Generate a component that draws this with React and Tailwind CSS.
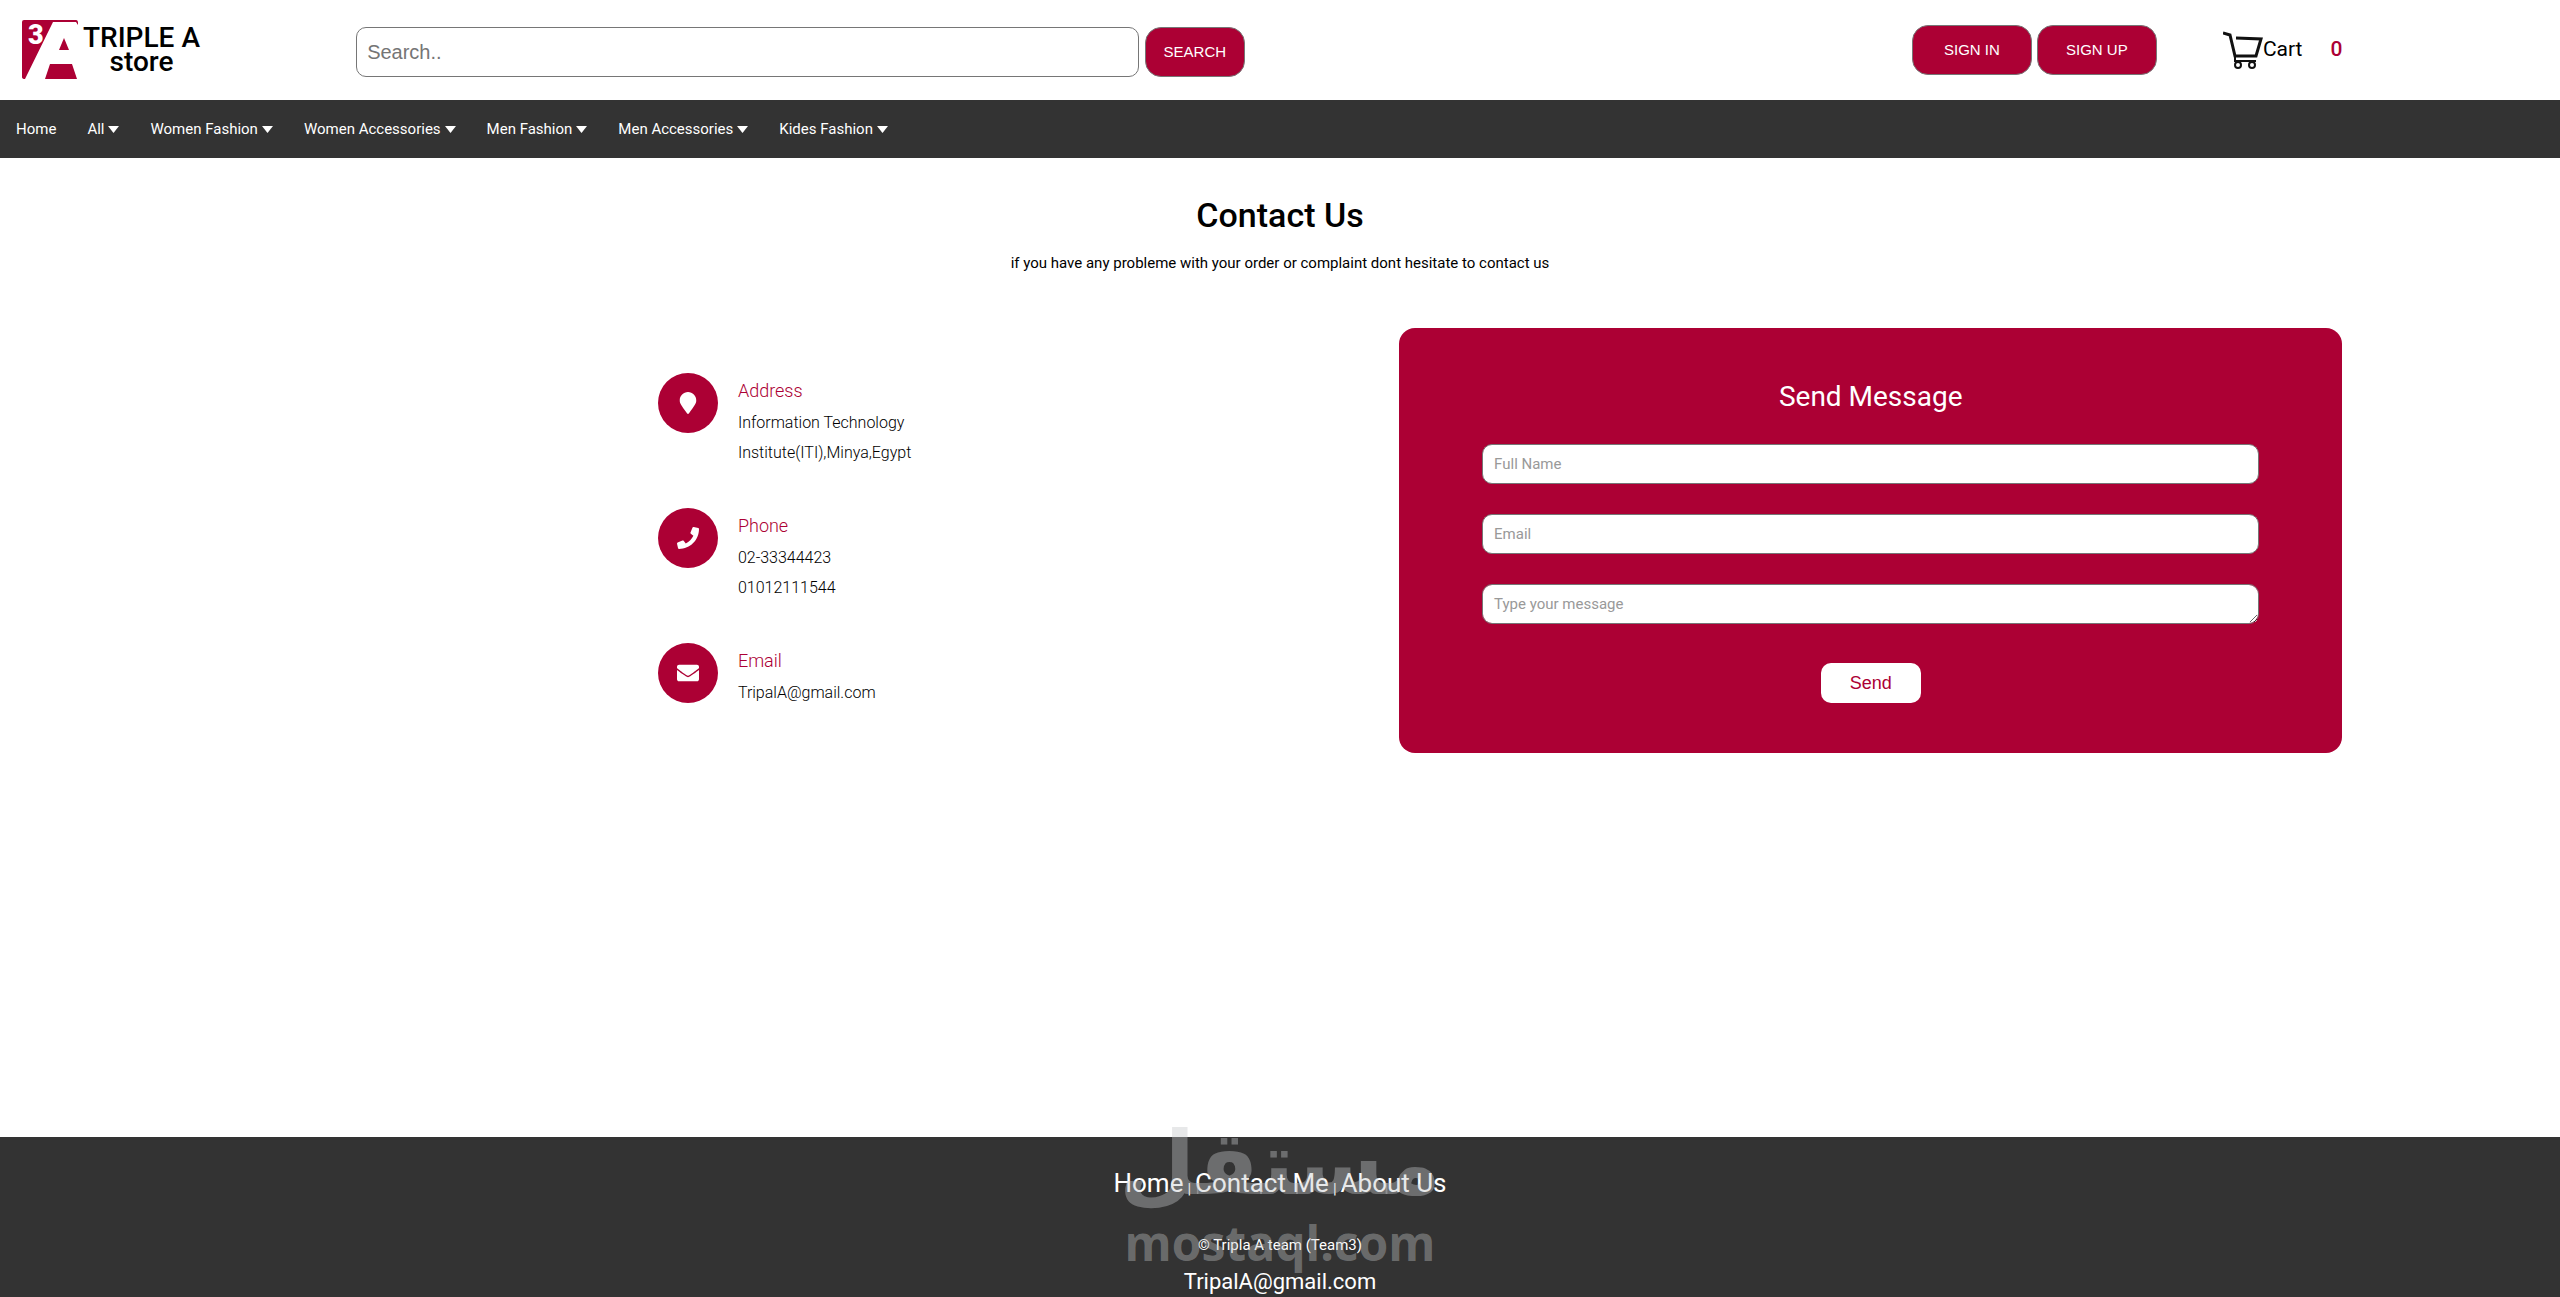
import { FaEnvelope, FaMapMarker, FaPhone } from "react-icons/fa";

const categories = ["All", "Women Fashion", "Women Accessories", "Men Fashion", "Men Accessories", "Kides Fashion"];

const contacts = [
  { title: "Address", icon: FaMapMarker, lines: ["Information Technology", "Institute(ITI),Minya,Egypt"] },
  { title: "Phone", icon: FaPhone, lines: ["02-33344423", "01012111544"] },
  { title: "Email", icon: FaEnvelope, lines: ["TripalA@gmail.com"] },
];

const headerButton =
  "h-[50px] rounded-2xl border border-[#767676] bg-[#ac0034] font-['Liberation_Sans',sans-serif] text-[15px] text-white";

const field =
  "block h-10 w-full rounded-[10px] border border-[#767676] bg-white px-[11px] text-[15px] text-black outline-none placeholder:text-[#999]";

const Logo = () => (
  <a href="#home" className="flex items-center gap-1">
    <svg viewBox="0 0 57 60" className="h-[60px] w-[57px]" aria-hidden="true">
      <path fill="#ac0034" d="M2 0H54Q56 0 56 3V5L54 2H31L3 59Q0 59 0 57V2Q0 0 2 0Z" />
      <path fill="#ac0034" d="M42 18L47 30H37Z" />
      <path fill="#ac0034" d="M28 44H50L55 59H23Z" />
      <text x="6" y="24" fill="#fff" fontFamily="Roboto, sans-serif" fontSize="27" fontWeight="900">
        3
      </text>
    </svg>
    <span className="flex flex-col text-center text-[28px] leading-6 font-medium text-black">
      <span>TRIPLE A</span>
      <span>store</span>
    </span>
  </a>
);

const CartIcon = () => (
  <svg viewBox="0 0 40 38" className="h-[38px] w-10" fill="none" stroke="#111" strokeWidth="3" aria-hidden="true">
    <path d="M0 2L7 4L12 25H33L38 8L13 7" />
    <path d="M12 25V30H33" strokeWidth="2" />
    <circle cx="15" cy="34" r="3" strokeWidth="2" />
    <circle cx="29" cy="34" r="3" strokeWidth="2" />
  </svg>
);

const Header = () => (
  <header className="flex h-[100px] items-center pr-[8.5%] pl-[22px]">
    <div className="w-[14.4%]">
      <Logo />
    </div>
    <form className="flex w-[38.3%] gap-[6px] pt-1" onSubmit={(event) => event.preventDefault()}>
      <input
        type="search"
        aria-label="Search"
        placeholder="Search.."
        className="h-[50px] min-w-0 flex-1 rounded-[10px] border border-[#767676] px-[10px] font-['Liberation_Sans',sans-serif] text-[20px] outline-none placeholder:text-[#757575]"
      />
      <button className={`${headerButton} w-[100px]`}>SEARCH</button>
    </form>
    <div className="ml-auto flex items-center gap-[5px]">
      <button className={`${headerButton} w-[120px]`}>SIGN IN</button>
      <button className={`${headerButton} w-[120px]`}>SIGN UP</button>
    </div>
    <a href="#cart" className="ml-[66px] flex items-center text-[21px] text-black">
      <CartIcon />
      Cart
      <span className="ml-7 font-medium text-[#ac0034]">0</span>
    </a>
  </header>
);

const Nav = () => (
  <nav className="flex h-[58px] items-center gap-[31px] bg-[#333] px-4 text-[15px] text-white">
    <a href="#home">Home</a>
    {categories.map((name) => (
      <button key={name} className="flex items-center gap-1">
        {name}
        <svg viewBox="0 0 11 7" className="h-[7px] w-[11px]" fill="currentColor" aria-hidden="true">
          <path d="M0 0H11L5.5 7Z" />
        </svg>
      </button>
    ))}
  </nav>
);

const ContactList = () => (
  <ul className="flex flex-col gap-[30px] pt-[45px]">
    {contacts.map(({ title, icon: Icon, lines }) => (
      <li key={title} className="flex min-h-[105px] gap-5">
        <span className="flex size-[60px] items-center justify-center rounded-full bg-[#ac0034] text-white">
          <Icon size={22} />
        </span>
        <div className="pt-1 text-[16px] leading-[30px] font-light text-black">
          <h3 className="mb-[3px] text-[18px] leading-[28px] text-[#ac0034]">{title}</h3>
          {lines.map((line) => (
            <p key={line}>{line}</p>
          ))}
        </div>
      </li>
    ))}
  </ul>
);

const MessageForm = () => (
  <form
    className="flex h-[425px] w-[56%] flex-col items-center rounded-2xl bg-[#ac0034] px-[83px] pt-[46px]"
    onSubmit={(event) => event.preventDefault()}
  >
    <h2 className="text-[28px] leading-[46px] text-white">Send Message</h2>
    <div className="mt-6 flex w-full flex-col gap-[30px]">
      <input type="text" aria-label="Full Name" placeholder="Full Name" className={field} />
      <input type="email" aria-label="Email" placeholder="Email" className={field} />
      <textarea aria-label="Message" placeholder="Type your message" className={`${field} resize py-2`} />
    </div>
    <button className="mt-[39px] h-10 w-[100px] rounded-[10px] bg-white font-['Liberation_Sans',sans-serif] text-[18px] text-[#ac0034]">
      Send
    </button>
  </form>
);

const Watermark = () => (
  <div className="pointer-events-none absolute inset-x-0 -top-7 text-center font-bold text-[#c4c6c8]/40" aria-hidden="true">
    <p lang="ar" dir="rtl" className="font-['DejaVu_Sans',sans-serif] text-[88px] leading-[110px]">
      مستقل
    </p>
    <p className="font-['Open_Sans',sans-serif] text-[48px] leading-[48px]">mostaql.com</p>
  </div>
);

const Footer = () => (
  <footer className="relative mt-auto h-40 bg-[#333] pt-6 text-center text-white">
    <div className="flex items-end justify-center gap-1 text-[26px] leading-[44px]">
      <a href="#home">Home</a>
      <span className="text-[15px] leading-8">|</span>
      <a href="#contact">Contact Me</a>
      <span className="text-[15px] leading-8">|</span>
      <a href="#about">About Us</a>
    </div>
    <p className="mt-[26px] text-[15px] leading-[28px]">© Tripla A team (Team3)</p>
    <a href="mailto:TripalA@gmail.com" className="block pt-2 text-[22px] leading-[30px]">
      TripalA@gmail.com
    </a>
    <Watermark />
  </footer>
);

export default function App() {
  return (
    <div className="flex min-h-screen flex-col bg-white font-['Roboto',sans-serif]">
      <Header />
      <Nav />
      <main>
        <div className="pt-8 text-center text-black">
          <h1 className="text-[34px] leading-[50px] font-medium">Contact Us</h1>
          <p className="mt-2 text-[15px] leading-[30px]">
            if you have any probleme with your order or complaint dont hesitate to contact us
          </p>
        </div>
        <section className="mt-[50px] flex justify-between pr-[8.5%] pl-[25.7%]">
          <ContactList />
          <MessageForm />
        </section>
      </main>
      <Footer />
    </div>
  );
}
